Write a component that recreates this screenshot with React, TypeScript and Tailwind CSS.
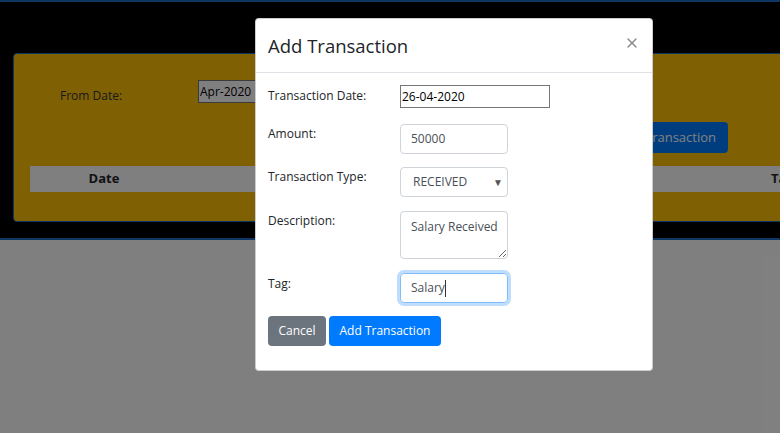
import { X } from 'lucide-react';

export default function App() {
    return (
        <div className="relative w-[780px] h-[433px] overflow-hidden bg-white font-['Open_Sans',sans-serif]">
            {/* Page behind the modal */}
            <div className="h-[240px] bg-black border-t-[2px] border-b-[2px] border-[#1a6fc4] pt-[51px]">
                <div className="ml-[13px] w-[800px] h-[169px] bg-[#ffc107] border border-[#1a6fc4] rounded-[4px]">
                    <div className="flex items-start pt-[26px]">
                        <span className="ml-[46px] mt-[7px] w-[138px] text-[12px] text-[#333]">From Date:</span>
                        <div className="h-[23px] w-[80px] border border-[#767676] bg-white pl-[1px] text-[12px] leading-[21px] text-black">Apr-2020</div>
                    </div>
                    <div className="flex justify-end w-[714px] mt-[17px]">
                        <button className="h-[31px] px-[12px] rounded-[4px] bg-[#007bff] text-white text-[13px]">Add Transaction</button>
                    </div>
                    <div className="flex items-center ml-[16px] mt-[13px] h-[26px] bg-white text-[13px] font-bold text-[#212529]">
                        <span className="w-[148px] text-center">Date</span>
                        <span className="ml-[593px]">Tag</span>
                    </div>
                </div>
            </div>

            {/* Backdrop */}
            <div className="absolute inset-0 bg-black/50" />

            {/* Modal */}
            <div className="absolute left-[255px] top-[18px] w-[398px] h-[353px] bg-white rounded-[4px] border border-black/20">
                <div className="flex items-center justify-between h-[54px] pl-[12px] pr-[12px] border-b border-[#dee2e6]">
                    <h5 className="text-[18.5px] font-medium text-[#212529]">Add Transaction</h5>
                    <X className="w-[16px] h-[16px] mb-[6px] text-[#888]" strokeWidth={2} />
                </div>
                <div className="px-[12px] text-[12px] text-[#212529]">
                    <div className="flex items-start mt-[12px]">
                        <label className="w-[132px] mt-[1px] leading-[20px]">Transaction Date:</label>
                        <div className="w-[150px] h-[23px] border border-[#767676] pl-[1px] leading-[21px] text-black">26-04-2020</div>
                    </div>
                    <div className="flex items-start mt-[16px]">
                        <label className="w-[132px] leading-[20px]">Amount:</label>
                        <div className="w-[108px] h-[30px] border border-[#ced4da] rounded-[4px] px-[10px] leading-[28px] text-[#495057]">50000</div>
                    </div>
                    <div className="flex items-start mt-[13px]">
                        <label className="w-[132px] leading-[20px]">Transaction Type:</label>
                        <div className="flex items-center justify-between w-[108px] h-[30px] border border-[#ced4da] rounded-[4px] pl-[12px] pr-[4px] text-[#495057]">
                            <span>RECEIVED</span>
                            <span className="text-[10px] text-[#555]">▼</span>
                        </div>
                    </div>
                    <div className="flex items-start mt-[14px]">
                        <label className="w-[132px] leading-[20px]">Description:</label>
                        <textarea
                            readOnly
                            value="Salary Received"
                            className="w-[108px] h-[48px] overflow-hidden border border-[#ced4da] rounded-[4px] pl-[10px] pr-[1px] py-[5px] text-[12px] leading-[20px] text-[#495057] outline-none"
                        />
                    </div>
                    <div className="flex items-start mt-[14px]">
                        <label className="w-[132px] mt-[1px] leading-[20px]">Tag:</label>
                        <div className="flex items-center w-[108px] h-[30px] border border-[#80bdff] rounded-[4px] px-[10px] text-[#495057] shadow-[0_0_0_3px_rgba(0,123,255,0.25)]">
                            <span>Salary</span>
                            <span className="w-px h-[17px] bg-[#333]" />
                        </div>
                    </div>
                    <div className="flex gap-[3px] mt-[13px]">
                        <button className="w-[58px] h-[30px] rounded-[4px] bg-[#6c757d] text-white text-[12px]">Cancel</button>
                        <button className="w-[112px] h-[30px] rounded-[4px] bg-[#007bff] text-white text-[12px]">Add Transaction</button>
                    </div>
                </div>
            </div>
        </div>
    );
}
